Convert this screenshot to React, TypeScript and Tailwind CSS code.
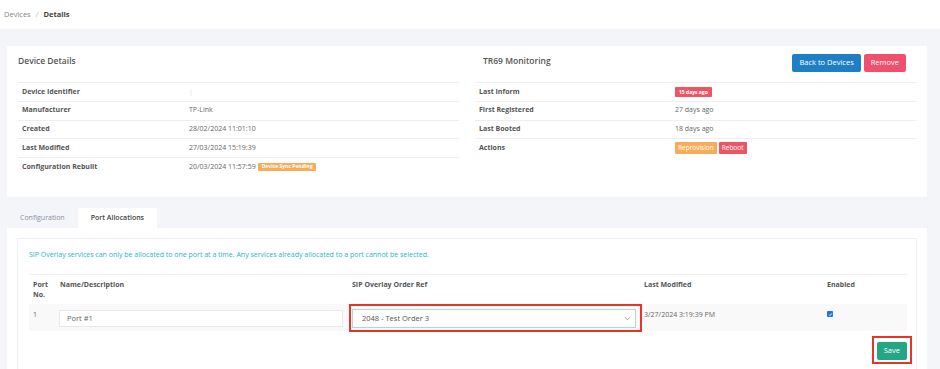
import React from "react";

const leftRows: { label: string; value: React.ReactNode }[] = [
  { label: "Device Identifier", value: <span className="text-[#ddd]">|</span> },
  { label: "Manufacturer", value: "TP-Link" },
  { label: "Created", value: "28/02/2024 11:01:10" },
  { label: "Last Modified", value: "27/03/2024 15:19:39" },
  {
    label: "Configuration Rebuilt",
    value: (
      <span className="flex items-center gap-[2px]">
        20/03/2024 11:57:59
        <span className="inline-flex h-[8px] items-center rounded-[1px] bg-[#f8ac59] px-[4px] text-[5px] font-bold leading-none text-white">
          Device Sync Pending
        </span>
      </span>
    ),
  },
];

const rightRows: { label: string; value: React.ReactNode }[] = [
  {
    label: "Last Inform",
    value: (
      <span className="inline-flex h-[10px] items-center rounded-[1px] bg-[#ed5565] px-[4px] text-[5px] font-bold leading-none text-white">
        15 days ago
      </span>
    ),
  },
  { label: "First Registered", value: "27 days ago" },
  { label: "Last Booted", value: "18 days ago" },
  {
    label: "Actions",
    value: (
      <span className="flex items-center gap-[2px]">
        <span className="inline-flex h-[12px] items-center rounded-[1px] bg-[#f8ac59] px-[3px] text-[6.5px] leading-none text-white">
          Reprovision
        </span>
        <span className="inline-flex h-[12px] items-center rounded-[1px] bg-[#ed5565] px-[3px] text-[6.5px] leading-none text-white">
          Reboot
        </span>
      </span>
    ),
  },
];

function InfoTable({
  rows,
  labelWidth,
}: {
  rows: { label: string; value: React.ReactNode }[];
  labelWidth: string;
}) {
  return (
    <div className="flex flex-col">
      {rows.map((r) => (
        <div
          key={r.label}
          className="flex h-[18.75px] items-center border-t border-[#eeeeee] text-[7px]"
        >
          <div className={`${labelWidth} shrink-0 pl-[4px] font-bold text-[#555]`}>{r.label}</div>
          <div className="pl-[4px] text-[#666]">{r.value}</div>
        </div>
      ))}
    </div>
  );
}

export default function App() {
  return (
    <div className="h-[369px] w-[940px] overflow-hidden bg-[#f4f5f9] font-['Open_Sans',sans-serif]">
      {/* Breadcrumb */}
      <div className="flex h-[29px] items-center bg-white pl-[4px] text-[7.5px]">
        <span className="text-[#888]">Devices</span>
        <span className="mx-[5px] text-[#bbb]">/</span>
        <span className="font-bold text-[#444]">Details</span>
      </div>

      {/* Device details card */}
      <div className="ml-[7px] mt-[17px] flex h-[151px] w-[920px] gap-[16px] bg-white px-[11px]">
        <div className="w-[441px]">
          <div className="h-[36px] pt-[9px] text-[8.5px] font-semibold leading-[12px] text-[#555]">
            Device Details
          </div>
          <InfoTable rows={leftRows} labelWidth="w-[167px]" />
        </div>
        <div className="w-[441px]">
          <div className="flex h-[36px] items-start justify-between pt-[8px] pl-[8px] pr-[10px]">
            <div className="pt-[1px] text-[8.5px] font-semibold leading-[12px] text-[#555]">
              TR69 Monitoring
            </div>
            <div className="flex gap-[3px]">
              <button className="h-[18px] rounded-[2px] bg-[#1e7fc5] px-[7px] text-[7.5px] text-white">
                Back to Devices
              </button>
              <button className="h-[18px] rounded-[2px] bg-[#f0506e] px-[7px] text-[7.5px] text-white">
                Remove
              </button>
            </div>
          </div>
          <InfoTable rows={rightRows} labelWidth="w-[196px]" />
        </div>
      </div>

      {/* Tabs */}
      <div className="ml-[7px] mt-[11px] flex h-[20px] text-[7px]">
        <div className="flex items-center px-[13px] text-[#8a8fa3]">Configuration</div>
        <div className="flex items-center bg-white px-[13px] font-semibold text-[#444]">
          Port Allocations
        </div>
      </div>

      {/* Port allocations panel */}
      <div className="ml-[7px] h-[200px] w-[920px] bg-white px-[10px] pt-[10px]">
        <div className="h-full border-l border-r border-t border-[#eef0f3] pl-[11px] pr-[9px] pt-[11px]">
          <div className="text-[7px] leading-[10px] text-[#1fb5c6]">
            SIP Overlay services can only be allocated to one port at a time. Any services already
            allocated to a port cannot be selected.
          </div>

          <div className="mt-[14px] border-t border-[#eeeeee]">
            <div className="grid grid-cols-[26px_293px_292px_183px_83px] pb-[4px] pt-[5px] text-[7px] font-bold leading-[10px] text-[#555]">
              <div className="pl-[4px]">
                Port
                <br />
                No.
              </div>
              <div className="pl-[5px]">Name/Description</div>
              <div className="pl-[4px]">SIP Overlay Order Ref</div>
              <div className="pl-[4px]">Last Modified</div>
              <div className="pl-[4px]">Enabled</div>
            </div>

            <div className="grid h-[27px] grid-cols-[26px_293px_292px_183px_83px] bg-[#f9f9f9] text-[7px] text-[#666]">
              <div className="pl-[4px] pt-[6px] leading-[10px]">1</div>
              <div className="pl-[4px] pr-[5px] pt-[6px]">
                <div className="flex h-[17px] items-center border border-[#e8e8e8] bg-white pl-[7px] text-[7.5px] text-[#666]">
                  Port #1
                </div>
              </div>
              <div className="relative pl-[4px] pr-[4px] pt-[5px]">
                <div className="flex h-[19px] items-center justify-between border border-[#a9ddd3] bg-white pl-[9px] pr-[4px] text-[7.5px] text-[#555]">
                  <span>2048 - Test Order 3</span>
                  <svg width="7" height="5" viewBox="0 0 7 5" fill="none">
                    <path d="M0.8 1 L3.5 3.8 L6.2 1" stroke="#888" strokeWidth="0.8" />
                  </svg>
                </div>
                <div className="pointer-events-none absolute left-[1px] right-[-2px] top-0 h-[28px] border-2 border-[#e5352b]" />
              </div>
              <div className="pl-[4px] pt-[6px] leading-[10px]">3/27/2024 3:19:39 PM</div>
              <div className="pl-[4px] pt-[7px]">
                <div className="flex h-[6px] w-[6px] items-center justify-center rounded-[1px] bg-[#1a73e8]">
                  <svg width="5" height="5" viewBox="0 0 5 5" fill="none">
                    <path d="M1 2.6 L2 3.6 L4 1.3" stroke="white" strokeWidth="0.9" />
                  </svg>
                </div>
              </div>
            </div>

            <div className="mt-[11px] flex justify-end">
              <div className="relative flex">
                <button className="h-[18px] rounded-[2px] bg-[#22a685] px-[7px] text-[7.5px] leading-none text-white">
                  Save
                </button>
                <div className="pointer-events-none absolute left-[-5px] right-[-5px] top-[-6px] bottom-[-4px] border-2 border-[#e5352b]" />
              </div>
            </div>
          </div>
        </div>
      </div>
    </div>
  );
}
